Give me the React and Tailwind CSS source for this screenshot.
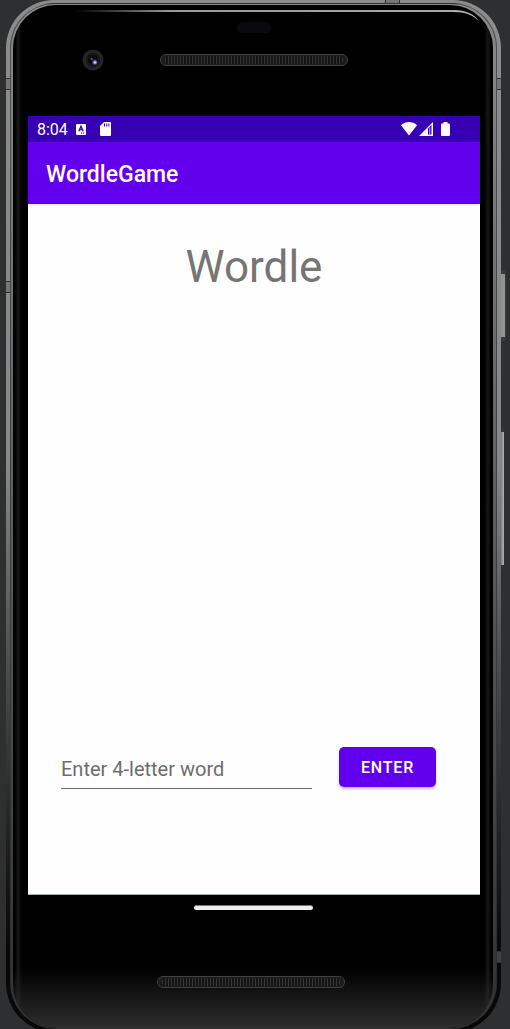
import { useState } from "react";

function Speaker() {
  return (
    <div className="h-3 w-[188px] rounded-full border border-[#414141] bg-[#1b1b1b] px-1 py-px">
      <div className="h-full rounded-full bg-[repeating-linear-gradient(90deg,#333333_0px,#333333_1px,#151515_1px,#151515_3px)]" />
    </div>
  );
}

function Camera() {
  return (
    <svg className="size-[22px]" viewBox="0 0 22 22" aria-hidden="true">
      <circle cx="11" cy="11" r="10.5" fill="#242424" />
      <circle cx="11" cy="11" r="7" fill="#111111" />
      <circle cx="11" cy="11" r="5.5" fill="#09090b" stroke="#26262a" strokeWidth="0.6" />
      <circle cx="9.6" cy="10" r="1.2" fill="#51418a" />
      <circle cx="12.8" cy="13.2" r="2.5" fill="#5d4d91" />
      <circle cx="13" cy="13.4" r="1.2" fill="#d9d4f2" />
    </svg>
  );
}

function StatusBar() {
  return (
    <div className="flex h-[26px] items-center bg-[#3700b3] pl-[9px] pr-[30px] text-white">
      <span className="pt-[2px] text-base leading-6">8:04</span>
      <svg className="ml-2 h-[11px] w-[10px]" viewBox="0 0 10 11" aria-hidden="true">
        <rect width="10" height="11" rx="1" fill="#fff" />
        <path d="M2.8 7.2 5 2.2l2.2 5M3.6 5.6h2.8" fill="none" stroke="#3700b3" strokeWidth="1.3" />
        <path d="M5 9h1.2M7 9h1.2" stroke="#3700b3" strokeWidth="1" />
      </svg>
      <svg className="ml-[14px] h-[14px] w-[11px]" viewBox="0 0 11 14" aria-hidden="true">
        <path d="M4 0h6a1 1 0 0 1 1 1v12a1 1 0 0 1-1 1H1a1 1 0 0 1-1-1V4z" fill="#fff" />
        <path d="M4.5 1.500v3M6.700 1.500v3M8.900 1.500v3" stroke="#3700b3" strokeWidth="1" />
      </svg>
      <div className="ml-auto flex items-center">
        <svg className="h-[14px] w-4" viewBox="0 0 16 14" aria-hidden="true">
          <path d="M0 3.3C4.500-1.100 11.500-1.100 16 3.300L8 13.500z" fill="#fff" />
        </svg>
        <svg className="ml-[2px] h-[14px] w-[14px]" viewBox="0 0 14 14" aria-hidden="true">
          <path d="M14 0v14H0z" fill="#fff" />
          <path d="M9 6.500 12.500 3v9.500H9z" fill="#3700b3" />
          <path d="M10.700 5.500v7" stroke="#a78be0" strokeWidth="1.200" />
        </svg>
        <svg className="ml-2 h-[14px] w-[9px]" viewBox="0 0 9 14" aria-hidden="true">
          <path d="M2.500 0h4v1.400H8a1 1 0 0 1 1 1V13a1 1 0 0 1-1 1H1a1 1 0 0 1-1-1V2.400a1 1 0 0 1 1-1h1.500z" fill="#fff" />
        </svg>
      </div>
    </div>
  );
}

function Screen() {
  const [guess, setGuess] = useState("");
  return (
    <main className="flex flex-1 flex-col border-b border-[#a9b0ad] bg-[#fefefe]">
      <StatusBar />
      <header className="z-10 flex h-[62px] items-center bg-[#6200ee] px-[18px] pt-1 shadow-sm">
        <span className="text-[23px] leading-7 font-medium text-white">WordleGame</span>
      </header>
      <h1 className="mt-[37px] text-center text-[44px] leading-[52px] text-[#757575]">Wordle</h1>
      <form
        className="mt-auto mb-[105px] flex items-end gap-[27px] pr-11 pl-[33px]"
        onSubmit={(event) => event.preventDefault()}
      >
        <input
          type="text"
          aria-label="Enter 4-letter word"
          placeholder="Enter 4-letter word"
          maxLength={4}
          value={guess}
          onChange={(event) => setGuess(event.target.value)}
          className="h-10 min-w-0 flex-1 border-b border-[#6d6d6d] text-xl text-[#212121] outline-none placeholder:text-[#6d6d6d]"
        />
        <button
          type="submit"
          className="mb-[2px] h-10 w-[97px] rounded-[5px] bg-[#6200ee] pt-px text-base font-medium tracking-wider text-white shadow-[0_2px_3px_rgba(0,0,0,0.25)]"
        >
          ENTER
        </button>
      </form>
    </main>
  );
}

function AntennaBand({ place }) {
  return <div className={`absolute border-[#303030] bg-[#686868]/60 ${place}`} />;
}

export default function App() {
  return (
    <div className="relative flex min-h-screen flex-col overflow-hidden bg-[#2e2f31] font-[Roboto,sans-serif]">
      <div className="absolute top-[270px] right-[4px] h-[71px] w-[6px] rounded-r-sm border-y-4 border-r border-[#3a3a3a] bg-[#929292]" />
      <div className="absolute top-[428px] right-[6px] h-[141px] w-1 rounded-r-sm border-t-4 border-b-4 border-[#333333] bg-linear-to-r from-[#686868] to-[#b5b5b5]" />

      <div className="relative mr-[9px] -mb-1 ml-[6px] flex flex-1 flex-col overflow-hidden rounded-t-[48px] rounded-b-[50px] bg-linear-to-b from-[#8c8c8c] via-[#858988] via-45% to-[#080808] to-92% px-1 pt-[3px] pb-1">
        <AntennaBand place="top-[78px] left-0 h-3 w-2 border-y" />
        <AntennaBand place="top-[281px] left-0 h-3 w-2 border-y" />
        <AntennaBand place="top-[78px] right-0 h-3 w-2 border-y" />
        <AntennaBand place="right-0 bottom-[70px] h-3 w-2 border-y" />
        <AntennaBand place="top-0 right-[101px] h-1 w-[15px] border-x" />

        <div className="relative flex flex-1 flex-col rounded-t-[45px] rounded-b-[46px] border-x border-t border-[#2b2b2b]/60 bg-linear-to-b from-[#8a8a8a] via-[#626262] via-45% to-[#303030] pt-px pr-[3px] pb-px pl-[2px]">
          <div className="flex flex-1 flex-col overflow-hidden rounded-t-[43px] rounded-b-[44px] bg-[linear-gradient(90deg,#000_2px,#171717_5px,#000_9px,#000_calc(100%-9px),#171717_calc(100%-5px),#000_calc(100%-2px))]">
            <div className="flex h-[111px] flex-col pr-[13px] pl-[15px]">
              <div className="mt-1 ml-12 flex h-[13px] items-start">
                <div className="mt-px h-[2px] flex-1 bg-linear-to-r from-transparent via-[#999999] via-25% to-[#a8a8a8]" />
                <svg className="h-[13px] w-[26px]" viewBox="0 0 26 13" aria-hidden="true">
                  <path d="M0 1C12 1 20 5 25 12 18 6 12 3 0 3z" fill="#b5b5b5" />
                </svg>
              </div>
              <div className="mx-auto h-[11px] w-[34px] rounded-full bg-[#0a0a0e]" />
              <div className="mt-4 grid h-[22px] grid-cols-[1fr_188px_1fr] items-center">
                <div className="flex justify-center pr-[3px]">
                  <Camera />
                </div>
                <Speaker />
              </div>
            </div>

            <div className="flex flex-1 flex-col pr-[13px] pl-[15px]">
              <Screen />
            </div>

            <div className="flex h-[133px] flex-col items-center bg-linear-to-b from-transparent from-55% to-[#2e2e2e] pt-[10px] pr-[5px]">
              <div className="ml-[6px] h-[5px] w-[119px] rounded-full border-t border-[#777777] bg-[#eeeeee]" />
              <div className="mt-[66px]">
                <Speaker />
              </div>
            </div>
          </div>
        </div>
      </div>
    </div>
  );
}
